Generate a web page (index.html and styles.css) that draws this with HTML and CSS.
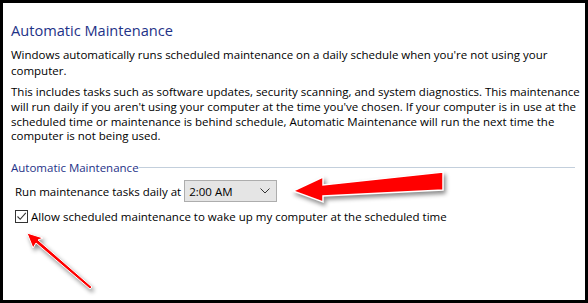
FILE: index.html
```html
<html lang="en">
<head>
    <meta charset="UTF-8">
    <title>Automatic Maintenance</title>
    <link rel="stylesheet" href="styles.css">
</head>
<body>

<div class="frame">
    <h1 class="title">Automatic Maintenance</h1>

    <p class="text">Windows automatically runs scheduled maintenance on a daily schedule when you're not using your<br>computer.</p>

    <p class="text">This includes tasks such as software updates, security scanning, and system diagnostics. This maintenance<br>will run daily if you aren't using your computer at the time you've chosen. If your computer is in use at the<br>scheduled time or maintenance is behind schedule, Automatic Maintenance will run the next time the<br>computer is not being used.</p>

    <div class="group">
        <span class="group-label">Automatic Maintenance</span>
        <span class="group-line"></span>
    </div>

    <div class="row">
        <span>Run maintenance tasks daily at</span>
        <div class="combo">
            <span>2:00 AM</span>
            <svg width="10" height="6" viewBox="0 0 10 6"><path d="M0.5 0.5 L5 5 L9.5 0.5" fill="none" stroke="#333" stroke-width="1"/></svg>
        </div>
    </div>

    <label class="check-row">
        <span class="checkbox">
            <svg width="11" height="11" viewBox="0 0 11 11"><path d="M1.5 5.5 L4.2 8.3 L9.8 1.8" fill="none" stroke="#333" stroke-width="1.1"/></svg>
        </span>
        <span>Allow scheduled maintenance to wake up my computer at the scheduled time</span>
    </label>

    <!-- arrows drawn over the dialog -->
    <svg class="arrow arrow-combo" width="160" height="40" viewBox="0 0 160 40">
        <path d="M3 21 L33 7 L33 15 L153 2 L153 20 L33 26 L33 32 Z" fill="#ff0000" stroke="#fff" stroke-width="1.5" stroke-linejoin="miter"/>
    </svg>
    <svg class="arrow arrow-check" width="80" height="70" viewBox="0 0 80 70">
        <path d="M4 3 L20 8 L15 10 L69 57 L67 59 L13 13 L10 18 Z" fill="#ff0000" stroke="#fff" stroke-width="1"/>
    </svg>
</div>

</body>
</html>
```

FILE: styles.css
```css
* {
    margin: 0;
    padding: 0;
    box-sizing: border-box;
}

body {
    width: 588px;
    height: 303px;
    font-family: 'Open Sans', 'Noto Sans', sans-serif;
    font-size: 11.5px;
    color: #000;
    background-color: #fff;
}

.frame {
    position: relative;
    width: 588px;
    height: 303px;
    border: 3px solid #000;
    padding: 17px 8px 0 8px;
    white-space: nowrap;
}

.title {
    font-size: 14.6px;
    font-weight: normal;
    color: #1e3287;
    line-height: 20px;
    margin-bottom: 7px;
}

.text {
    line-height: 15.5px;
    margin-bottom: 7px;
}

.text + .text {
    line-height: 14.8px;
}

.group {
    display: flex;
    align-items: center;
    margin-top: 16px;
}

.group-label {
    color: #1e3287;
    line-height: 15px;
}

.group-line {
    flex: 1;
    height: 1px;
    background-color: #c3cfdc;
    margin-right: 2px;
}

.row {
    display: flex;
    align-items: center;
    gap: 3px;
    padding-left: 4px;
    margin-top: 5px;
}

.combo {
    display: flex;
    align-items: center;
    justify-content: space-between;
    width: 93px;
    height: 22px;
    padding: 0 6px 0 4px;
    background-color: #e5e5e5;
    border: 1px solid #adadad;
}

.check-row {
    display: flex;
    align-items: center;
    gap: 3px;
    padding-left: 4px;
    margin-top: 7px;
}

.checkbox {
    display: flex;
    align-items: center;
    justify-content: center;
    width: 13px;
    height: 13px;
    border: 1px solid #333;
    background-color: #fff;
}

.arrow {
    position: absolute;
    filter: drop-shadow(2px 3px 2px rgba(0, 0, 0, 0.45));
}

.arrow-combo {
    left: 287px;
    top: 167px;
}

.arrow-check {
    left: 20px;
    top: 227px;
}
```
